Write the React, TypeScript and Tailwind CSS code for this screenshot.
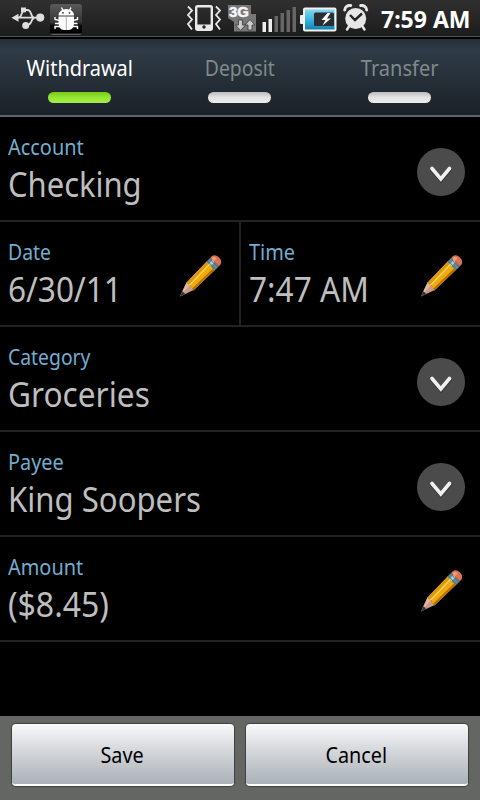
import { ReactNode } from 'react'

function UsbIcon() {
  return (
    <svg width="34" height="24" viewBox="0 0 34 24" fill="#dedede">
      <path d="M0.500 11.700l7-4v8z" />
      <path d="M5 11.700h23M13 4h3.500c4.500 0 3 7.500 6.500 7.500M14.500 19.500c7.500 0 5-7.500 9-7.500M8 11.500c3-.5 2-4.500 4-6" stroke="#dedede" strokeWidth="1.800" fill="none" />
      <rect x="10" y="1.500" width="5" height="4.800" />
      <circle cx="29.200" cy="11.600" r="4.100" />
      <circle cx="14.700" cy="19.600" r="3.500" />
    </svg>
  )
}

function DroidIcon() {
  return (
    <svg width="32" height="31" viewBox="0 0 32 31">
      <defs>
        <linearGradient id="droid" x1="0" y1="0" x2="0" y2="1">
          <stop offset="0" stopColor="#5a5a5a" />
          <stop offset="0.6" stopColor="#333" />
          <stop offset="0.700" stopColor="#0a0a0a" />
          <stop offset="0.930" stopColor="#000" />
          <stop offset="1" stopColor="#777" />
        </linearGradient>
      </defs>
      <rect width="32" height="31" rx="3" fill="url(#droid)" />
      <path d="M11.500 3.500l2 4M21 3.500l-2 4M5 13v2.500l5 1M27.500 13v2.500l-5 1M5 19.500h6M21 19.500h6.500M5 25v-2.500h5M27.500 25v-2.500h-5" stroke="#fff" strokeWidth="1.400" fill="none" />
      <path d="M8.500 11.500a7.700 6.500 0 0 1 15.500 0z" fill="#fff" />
      <path d="M8.500 12.500h15.500v6.500q0 6.500-5.500 7h-4.500q-5.500-.5-5.500-7z" fill="#fff" />
      <path d="M16.300 13v13M9 12h14.500" stroke="#999" strokeWidth="0.800" />
      <circle cx="13" cy="8.800" r="0.900" fill="#333" />
      <circle cx="19.500" cy="8.800" r="0.900" fill="#333" />
    </svg>
  )
}

function VibrateIcon() {
  return (
    <svg width="34" height="28" viewBox="0 0 34 28" fill="none" stroke="#e9e9e9">
      <rect x="9.200" y="1.200" width="15.600" height="23.600" rx="1.500" strokeWidth="2.400" />
      <path d="M9 19.500h16v5H9z" fill="#e9e9e9" stroke="none" />
      <circle cx="17" cy="22" r="1.700" fill="#222" stroke="none" />
      <path d="M1 1.500l4 4-4 4.500 4 4.500-4 4.500 4 5.500M29 1.500l4 4-4 4.500 4 4.500-4 4.500 4 5.500" strokeWidth="1.800" />
    </svg>
  )
}

function NetworkIcon() {
  return (
    <svg width="28" height="28" viewBox="0 0 28 28">
      <path d="M0 0h23v9h5v17.500H6v-9.500l-6-4z" fill="#777" />
      <text x="1" y="12" textLength="20" lengthAdjust="spacingAndGlyphs" fill="#f4f4f4" stroke="#f4f4f4" strokeWidth="0.500" className="font-['Liberation_Sans'] text-[14px] font-bold">3G</text>
      <path d="M10.500 15h4v5h3l-5 5.500-5-5.500h3zM20 25h4v-5h3l-5-5.500-5 5.500h3z" fill="#ccc" stroke="#444" strokeWidth="0.900" />
    </svg>
  )
}

function SignalIcon() {
  return (
    <svg width="34" height="26" viewBox="0 0 34 26">
      <path d="M0.500 16h3.500v10H0.500zM6.500 13h3.500v13H6.500z" fill="#eee" />
      <path d="M12.500 10h3.500v16h-3.500zM18.500 7h3.500v19h-3.500zM24.500 4h3.500v22h-3.500zM30.500 1h3.500v25h-3.500z" fill="#666" />
    </svg>
  )
}

function BatteryIcon() {
  return (
    <svg width="37" height="25" viewBox="0 0 37 25">
      <defs>
        <linearGradient id="battery" x1="0" y1="0" x2="0" y2="1">
          <stop offset="0" stopColor="#8cd5ef" />
          <stop offset="0.500" stopColor="#39b5e4" />
          <stop offset="1" stopColor="#1583af" />
        </linearGradient>
      </defs>
      <rect y="8" width="5" height="9" rx="1" fill="#eee" />
      <rect x="3" y="0.500" width="33.500" height="24" rx="2" fill="#f2f2f2" />
      <rect x="5" y="2.500" width="29.500" height="20" fill="url(#battery)" />
      <rect x="14" y="5.500" width="20" height="13.500" rx="1.500" fill="#2a2e33" />
      <path d="M27.500 6l-6 7h4l-3 5.500 8.500-7h-4l3.500-5.500z" fill="#fff" />
    </svg>
  )
}

function AlarmIcon() {
  return (
    <svg width="26" height="27" viewBox="0 0 26 27" fill="none" stroke="#e6e6e6">
      <circle cx="12.700" cy="14.500" r="10.500" fill="#e6e6e6" stroke="none" />
      <path d="M1.700 6a5 5 0 0 1 6-4.500M23.700 6a5 5 0 0 0-6-4.500" strokeWidth="3" strokeLinecap="round" />
      <path d="M6 22.500l-2 3M19.500 22.500l2 3" strokeWidth="2.400" strokeLinecap="round" />
      <path d="M7 11l5 5 7-6.500" stroke="#222" strokeWidth="2.400" />
    </svg>
  )
}

function Pencil() {
  return (
    <svg width="48" height="48" viewBox="0 0 48 48" className="shrink-0">
      <g transform="translate(4 43.500) rotate(-45) scale(0.950 1.080)">
        <path d="M0 0L15 -4.800Q17 0 15 4.800z" fill="#c99a84" />
        <path d="M0 0L15 -4.800L16 -1z" fill="#e0b8a0" />
        <path d="M0 0L5.500 -2Q6.500 0 5.500 2z" fill="#3c3532" />
        <path d="M14.500 -4.800L46 -5.500V5.500L14.500 4.800Q16 3 15 1.500Q17 0 15 -1.700Q16 -3 14.500 -4.800z" fill="#f0ab0d" />
        <path d="M14.800 -4.800L46 -5.500V-2.500L15.500 -1.800z" fill="#dc9812" />
        <path d="M15.500 -1.800L46 -2.500V-1.200L15.500 -0.600z" fill="#fbd45c" />
        <path d="M15 2.800L46 3.300V5.500L14.500 4.800z" fill="#b96e08" />
        <path d="M45.500 -5.600H51.500V5.600H45.500z" fill="#668c97" />
        <path d="M45.500 -2.500H51.500V0H45.500z" fill="#b4d0d6" />
        <path d="M46.700 -5.600V5.600M50 -5.600V5.600" stroke="#3c626e" strokeWidth="0.700" />
        <path d="M51.500 -5.600H54Q58 -4.500 58 0T54 5.600H51.500z" fill="#e07050" />
        <path d="M51.500 -4H54.500Q56 -2.500 55.500 -1H51.500z" fill="#f09c7e" />
      </g>
    </svg>
  )
}

function DropDown() {
  return (
    <svg width="48" height="48" viewBox="0 0 48 48" className="shrink-0">
      <circle cx="24" cy="24" r="24" fill="#4b4b4b" />
      <path d="M15 22l9 10.500 9-10.500" fill="none" stroke="#2f2f2f" strokeWidth="3.600" strokeLinecap="round" opacity="0.600" />
      <path d="M15 20.500l8.800 10.500 8.700-10.500" fill="none" stroke="#f0f0f0" strokeWidth="3.600" strokeLinecap="round" />
    </svg>
  )
}

function Tab({ label, active, fit = 'scale-x-[0.905]' }: { label: string; active?: boolean; fit?: string }) {
  return (
    <div className="flex flex-1 flex-col items-center pt-[14px]">
      <span className={`text-[22px] leading-7 ${fit} ${active ? 'text-white' : 'text-[#7f8a8a]'}`}>{label}</span>
      <div
        className={`mt-[11px] mr-px h-[11px] w-[63px] rounded-full ${
          active
            ? 'bg-linear-to-b from-[#79c91c] via-[#93e72f] to-[#a5ec4b]'
            : 'bg-linear-to-b from-[#bcbcbc] via-[#e3e3e3] to-[#ececec]'
        }`}
      />
    </div>
  )
}

interface FieldProps {
  label: string
  value: string
  labelFit?: string
  valueFit?: string
  children: ReactNode
}

function Field({ label, value, labelFit = 'scale-x-[0.905]', valueFit = 'scale-x-[0.93]', children }: FieldProps) {
  return (
    <div className="flex flex-1 justify-between pr-[15px]">
      <div className="flex flex-col items-start pl-2 pt-[15px] whitespace-nowrap">
        <span className={`origin-left text-[22px] leading-7 text-[#74acd0] ${labelFit}`}>{label}</span>
        <span className={`origin-left text-[34px] leading-[48px] text-[#bebebe] ${valueFit}`}>{value}</span>
      </div>
      <div className="pt-[31px]">{children}</div>
    </div>
  )
}

function Row({ children }: { children: ReactNode }) {
  return <div className="flex h-[105px] divide-x-2 divide-[#222] border-b-2 border-[#222]">{children}</div>
}

function Button({ label }: { label: string }) {
  return (
    <button className="h-[62px] flex-1 rounded-[4px] border-b-2 border-white bg-linear-to-b from-[#f8f9fa] via-[#d0d3d7] via-50% to-[#abb1b8] text-[22px] text-black shadow-[0_0_1px_1px_#3f413f]">
      <span className="mr-px inline-block scale-x-[0.9]">{label}</span>
    </button>
  )
}

export default function App() {
  return (
    <div className="flex h-[800px] w-[480px] flex-col overflow-hidden bg-black font-['Noto_Sans',sans-serif]">
      <div className="flex h-9 shrink-0 bg-linear-to-b from-[#303030] to-[#1c1c1c] *:shrink-0">
        <div className="ml-[11px] mt-[6px]"><UsbIcon /></div>
        <div className="ml-[5px] mt-[4px]"><DroidIcon /></div>
        <div className="ml-[105px] mt-[5px]"><VibrateIcon /></div>
        <div className="ml-[7px] mt-[5px]"><NetworkIcon /></div>
        <div className="ml-[6px] mt-[6px]"><SignalIcon /></div>
        <div className="ml-[4px] mt-[7px]"><BatteryIcon /></div>
        <div className="ml-[6px] mt-[4px]"><AlarmIcon /></div>
        <span className="ml-[12px] mt-[3px] origin-left text-[23px] leading-8 font-bold whitespace-nowrap text-white">7:59 AM</span>
      </div>
      <div className="h-[3px] shrink-0 border-t border-[#4b5358] bg-black" />

      <div className="flex h-[78px] shrink-0 border-b-2 border-[#5a646b] bg-linear-to-b from-[#263039] via-[#2f3b47] via-15% to-[#1b2127]">
        <Tab label="Withdrawal" active />
        <Tab label="Deposit" fit="scale-x-[0.88]" />
        <Tab label="Transfer" fit="scale-x-[0.91]" />
      </div>

      <div className="flex-1">
        <Row>
          <Field label="Account" value="Checking" valueFit="scale-x-[0.91]"><DropDown /></Field>
        </Row>
        <Row>
          <Field label="Date" value="6/30/11" labelFit="scale-x-[0.88]"><Pencil /></Field>
          <Field label="Time" value="7:47 AM"><Pencil /></Field>
        </Row>
        <Row>
          <Field label="Category" value="Groceries" labelFit="scale-x-[0.88]"><DropDown /></Field>
        </Row>
        <Row>
          <Field label="Payee" value="King Soopers" valueFit="scale-x-[0.915]"><DropDown /></Field>
        </Row>
        <Row>
          <Field label="Amount" value="($8.45)" valueFit="scale-x-[0.94]"><Pencil /></Field>
        </Row>
      </div>

      <div className="flex h-[84px] shrink-0 gap-3 bg-[#646663] px-3 pt-2">
        <Button label="Save" />
        <Button label="Cancel" />
      </div>
    </div>
  )
}
